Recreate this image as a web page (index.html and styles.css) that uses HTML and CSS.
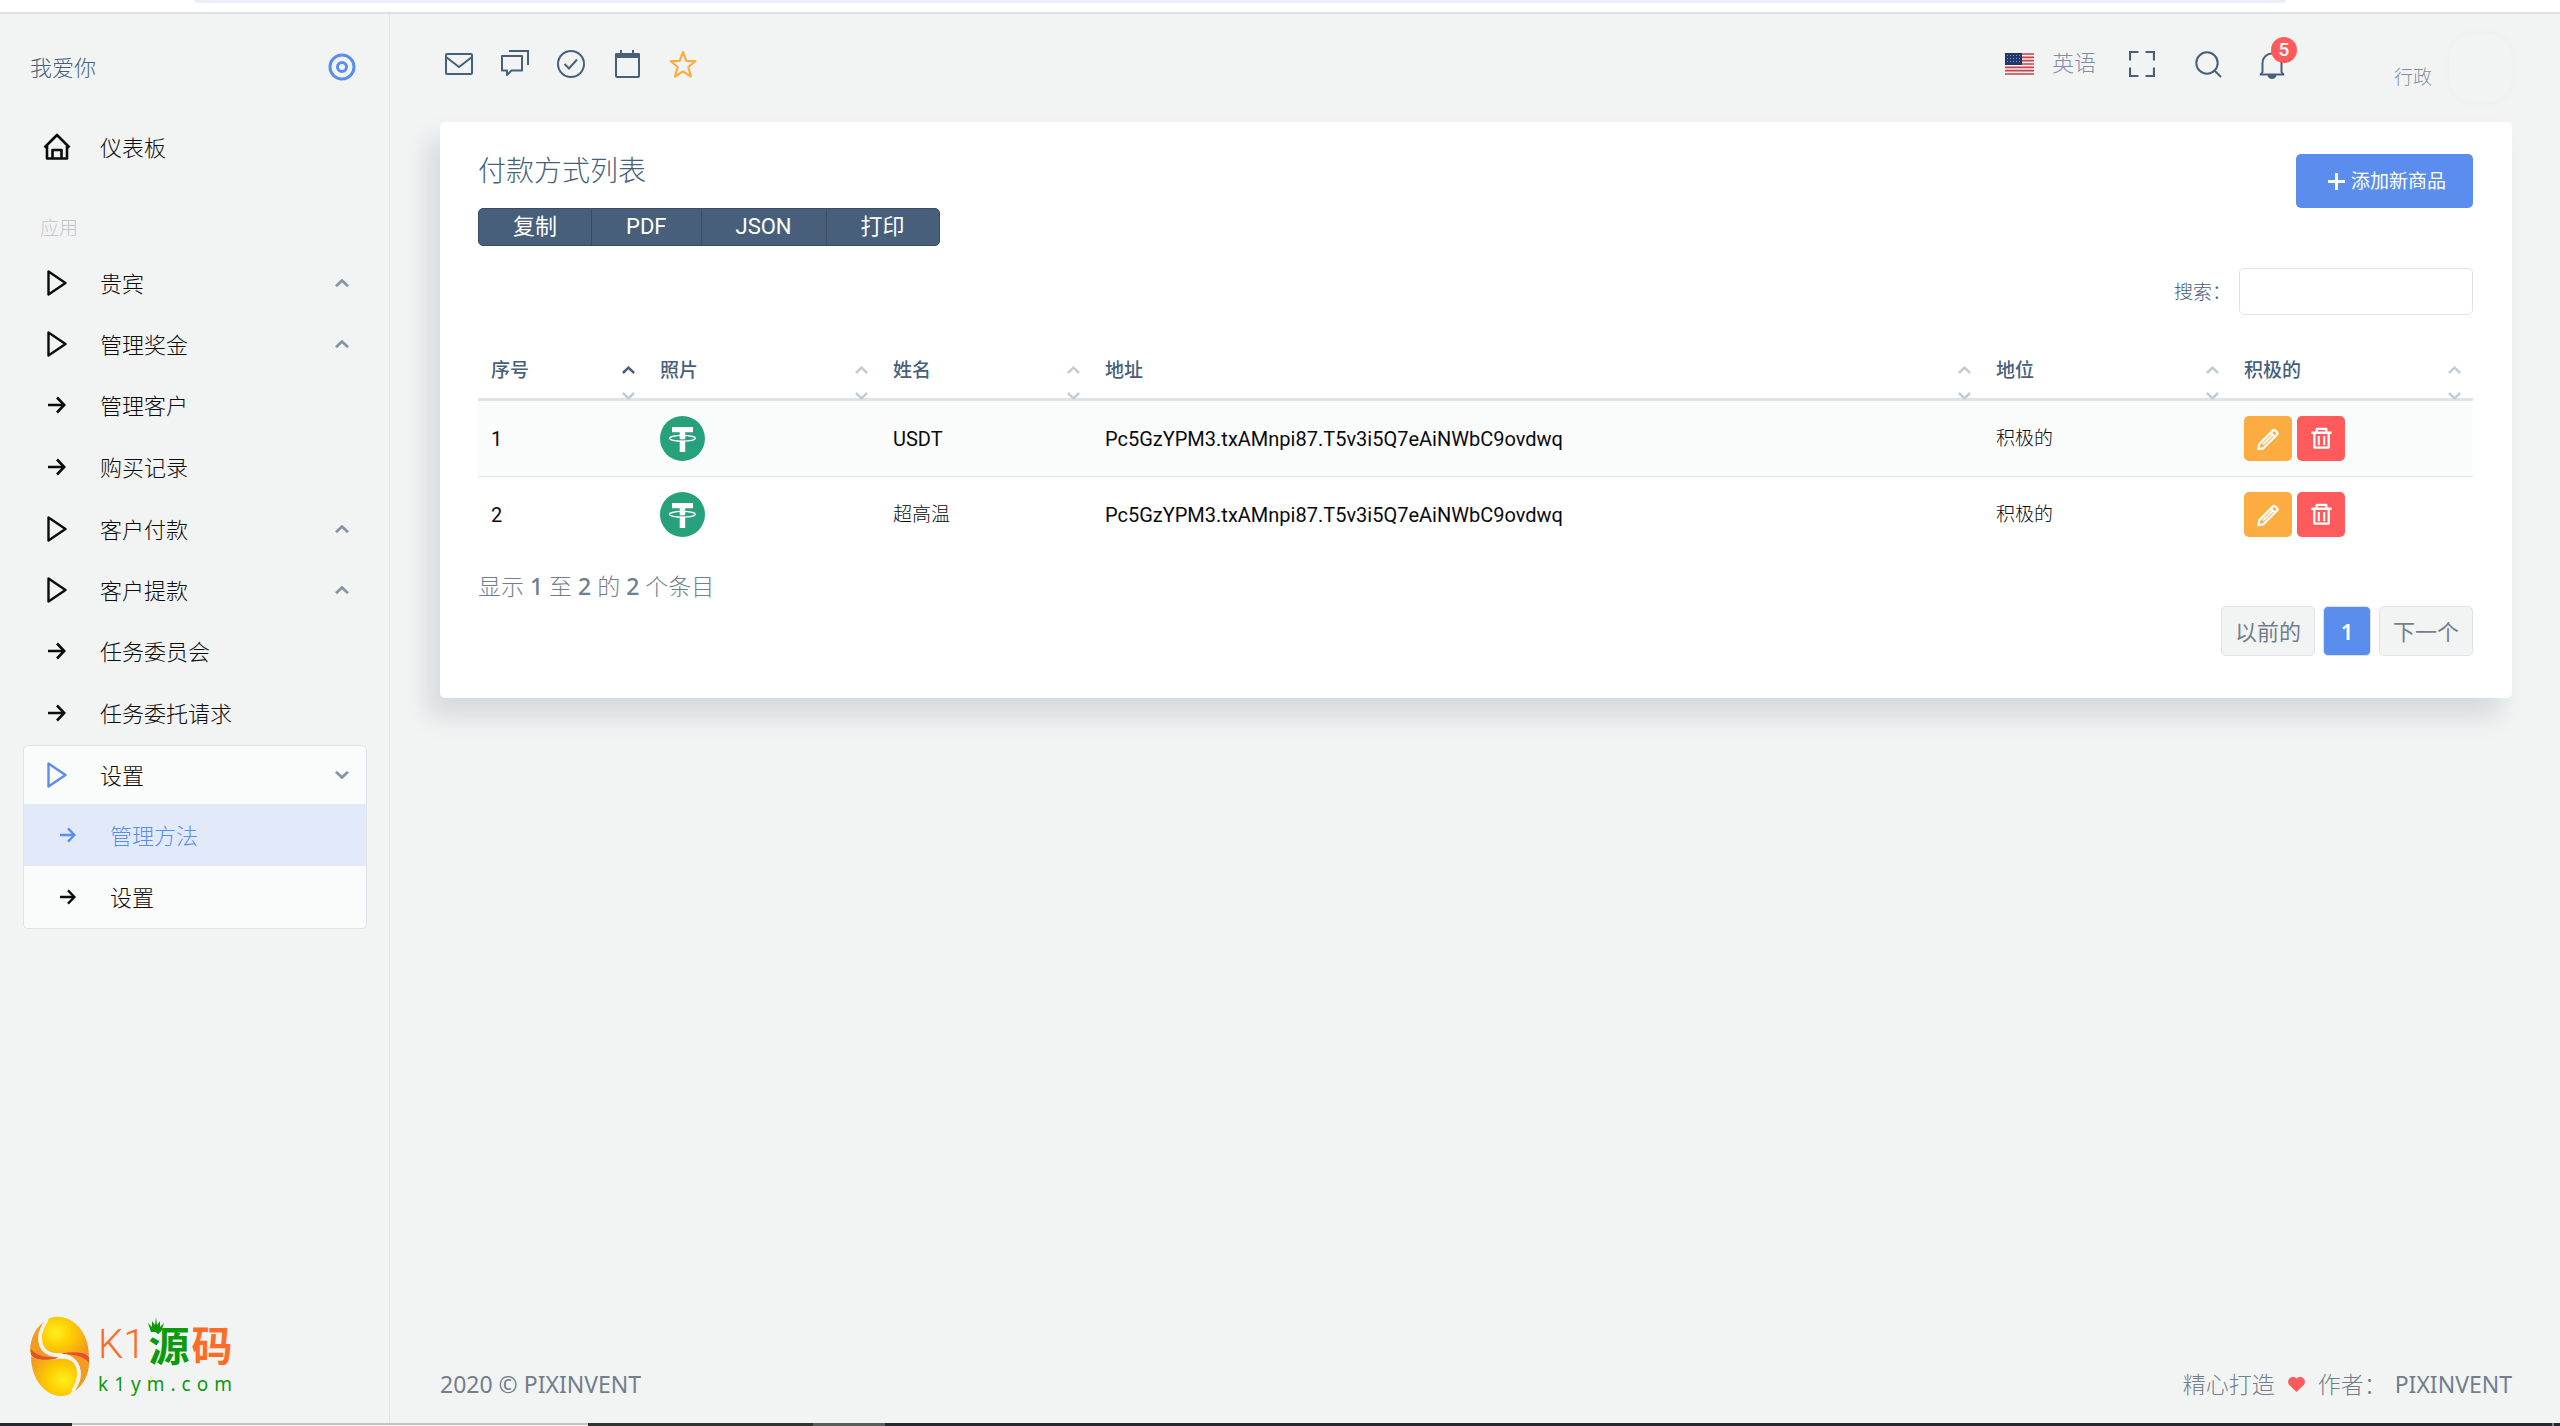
FILE: index.html
```html
<!DOCTYPE html>
<html lang="zh-CN">
<head>
<meta charset="utf-8">
<title>付款方式列表</title>
<link rel="stylesheet" href="styles.css">
</head>
<body>
<svg class="defs" aria-hidden="true">
  <symbol id="play" viewBox="0 0 20 26"><path d="M1.500 1.500v23L18.500 13z" fill="none" stroke="currentColor" stroke-width="2.400" stroke-linejoin="round"/></symbol>
  <symbol id="arrow" viewBox="0 0 18 18"><path d="M0 9h16M9 1.500 16.300 9 9 16.500" fill="none" stroke="currentColor" stroke-width="2.600"/></symbol>
  <symbol id="chevron" viewBox="0 0 14 8"><path d="M1 7.200 7 1.500 13 7.200" fill="none" stroke="currentColor" stroke-width="2.700"/></symbol>
  <symbol id="tether" viewBox="0 0 45 45"><circle cx="22.500" cy="22.500" r="22.500" fill="#26a17b"/><path d="M12 11h21v5.200h-7.800v4q0 1.500 0 3V36h-5.500V16.200H12z" fill="#fff"/><ellipse cx="22.400" cy="22.300" rx="13" ry="2.900" fill="none" stroke="#fff" stroke-width="1.300"/><path d="M19 23.700q3.500.4 7 0" fill="none" stroke="#26a17b" stroke-width="1"/></symbol>
  <symbol id="pencil" viewBox="0 0 24 24"><path d="M2.500 22 3.200 17.200 17 3.400a1.500 1.500 0 0 1 2.100 0l2 2a1.500 1.500 0 0 1 0 2.100L7.300 21.300z" fill="none" stroke="currentColor" stroke-width="2.300" stroke-linejoin="round"/><path d="M6.800 17.700 16.500 8M15.200 6l3.400 3.400" stroke="currentColor" stroke-width="1.800"/></symbol>
  <symbol id="trash" viewBox="0 0 24 24"><path d="M1.500 6h21M7 6V2h10v4M4.500 6v15.500H19.500V6" fill="none" stroke="currentColor" stroke-width="2.400" stroke-linejoin="round"/><path d="M9.200 9.500v9.500M14.800 9.500v9.500" stroke="currentColor" stroke-width="2.200"/></symbol>
</svg>

<div class="chrome"><div class="address"></div></div>

<div class="shell">
  <aside class="sidebar">
    <div class="brand">
      <a href="#">我爱你</a>
      <button class="pin" aria-label="固定菜单"><svg width="28" height="28" viewBox="0 0 28 28"><circle cx="14" cy="14" r="12" fill="none" stroke="currentColor" stroke-width="3"/><circle cx="14" cy="14" r="4.500" fill="none" stroke="currentColor" stroke-width="3"/></svg></button>
    </div>
    <nav class="menu">
      <a class="item leaf" href="#"><span class="ico"><svg width="28" height="28" viewBox="0 0 28 28"><path d="M1.500 14.500 14 2 26.500 14.500M4 12.500V25.500H24V12.500M9.500 25.500V17h9v8.500" fill="none" stroke="currentColor" stroke-width="2.600" stroke-linejoin="round"/></svg></span><span>仪表板</span></a>
      <div class="section">应用</div>
      <a class="item" href="#"><span class="ico"><svg width="20" height="26"><use href="#play"/></svg></span><span>贵宾</span><svg class="caret" width="14" height="8"><use href="#chevron"/></svg></a>
      <a class="item" href="#"><span class="ico"><svg width="20" height="26"><use href="#play"/></svg></span><span>管理奖金</span><svg class="caret" width="14" height="8"><use href="#chevron"/></svg></a>
      <a class="item leaf" href="#"><span class="ico"><svg width="18" height="18"><use href="#arrow"/></svg></span><span>管理客户</span></a>
      <a class="item leaf" href="#"><span class="ico"><svg width="18" height="18"><use href="#arrow"/></svg></span><span>购买记录</span></a>
      <a class="item" href="#"><span class="ico"><svg width="20" height="26"><use href="#play"/></svg></span><span>客户付款</span><svg class="caret" width="14" height="8"><use href="#chevron"/></svg></a>
      <a class="item" href="#"><span class="ico"><svg width="20" height="26"><use href="#play"/></svg></span><span>客户提款</span><svg class="caret" width="14" height="8"><use href="#chevron"/></svg></a>
      <a class="item leaf" href="#"><span class="ico"><svg width="18" height="18"><use href="#arrow"/></svg></span><span>任务委员会</span></a>
      <a class="item leaf" href="#"><span class="ico"><svg width="18" height="18"><use href="#arrow"/></svg></span><span>任务委托请求</span></a>
      <div class="group">
        <a class="item open" href="#"><span class="ico"><svg width="20" height="26"><use href="#play"/></svg></span><span>设置</span><svg class="caret" width="14" height="8"><use href="#chevron"/></svg></a>
        <a class="item sub active" href="#"><span class="ico"><svg width="16" height="16"><use href="#arrow"/></svg></span><span>管理方法</span></a>
        <a class="item sub" href="#"><span class="ico"><svg width="16" height="16"><use href="#arrow"/></svg></span><span>设置</span></a>
      </div>
    </nav>
    <a class="logo" href="#">
      <svg width="60" height="80" viewBox="0 0 60 80">
        <defs>
          <radialGradient id="g1" cx=".3" cy=".4" r=".8"><stop offset="0" stop-color="#fff01a"/><stop offset=".45" stop-color="#fdcb02"/><stop offset="1" stop-color="#f29a1f"/></radialGradient>
          <radialGradient id="g2" cx=".7" cy=".6" r=".8"><stop offset="0" stop-color="#fff01a"/><stop offset=".45" stop-color="#fdcb02"/><stop offset="1" stop-color="#f29a1f"/></radialGradient>
        </defs>
        <path d="M17 4C6 10 0 22 0 36 6 43 16 45 28 42 10 38 2 20 17 4z" fill="#f39a22"/>
        <path d="M1 33C6 40 16 42 29 41 18 46 6 45 1 39z" fill="#e4502a"/>
        <path d="M43 76C54 70 60 57 59 43 54 36 44 34 32 37 50 40 58 60 43 76z" fill="#f39a22"/>
        <path d="M59 47C54 40 44 38 31 38 42 34 54 34 59 41z" fill="#e4502a"/>
        <path d="M20 2C36-4 59 10 59 40 53 35 42 36 33 37 18 39 12 32 12 22 12 13 15 6 20 2z" fill="url(#g1)"/>
        <path d="M40 78C24 86 1 70 1 40 7 45 18 44 27 43 42 41 48 48 47 58 47 67 44 74 40 78z" fill="url(#g2)"/>
        <path d="M17 4C4 22 9 39 29 39.500 50 40 54 58 43 75" fill="none" stroke="#f6f4ea" stroke-width="3.500"/>
      </svg>
      <span class="wordmark">
        <span class="name"><span class="k1">K1</span><b class="yuan">源</b><b class="ma">码</b></span>
        <span class="domain">k1ym.com</span>
      </span>
      <svg class="crown" width="16" height="16" viewBox="0 0 16 16"><path d="M3 15 0 6l4 4L4 4l3 4 1-8 1 8 3-4v6l4-4-3 9z" fill="#0a9a0a"/></svg>
    </a>
  </aside>

  <main class="main">
    <header class="topbar">
      <nav class="tools">
        <a href="#" aria-label="邮件"><svg width="28" height="28" viewBox="0 0 28 28"><g fill="none" stroke="currentColor" stroke-width="2"><rect x="1" y="4" width="26" height="20" rx="1"/><path d="M1 7 14 17 27 7"/></g></svg></a>
        <a href="#" aria-label="聊天"><svg width="28" height="28" viewBox="0 0 28 28"><g fill="none" stroke="currentColor" stroke-width="2"><path d="M8 1H27V15"/><path d="M2 6H21V20.500H10.500L6 25V20.500H1V6z" stroke-linejoin="round"/></g></svg></a>
        <a href="#" aria-label="待办"><svg width="28" height="28" viewBox="0 0 28 28"><g fill="none" stroke="currentColor" stroke-width="2"><circle cx="14" cy="14" r="13"/><path d="M7.500 14 12 18.500 20 9.500"/></g></svg></a>
        <a href="#" aria-label="日历"><svg width="28" height="28" viewBox="0 0 28 28"><rect x="3" y="4" width="23" height="23" rx="1" fill="none" stroke="currentColor" stroke-width="2"/><path d="M2 3.500h25V8H2zM7 0h2v4H7zM19 0h2v4h-2z" fill="currentColor"/></svg></a>
        <a class="star" href="#" aria-label="收藏"><svg width="28" height="28" viewBox="0 0 28 28"><path d="M14 2 17.300 10.800 26.300 11.200 19.300 17 22 26.500 14 21.300 6 26.500 8.700 17 1.700 11.200 10.700 10.800z" fill="none" stroke="currentColor" stroke-width="2.200" stroke-linejoin="round"/></svg></a>
      </nav>
      <div class="user-tools">
        <a class="lang" href="#"><svg width="29" height="22" viewBox="0 0 29 22"><path fill="#f7eeee" d="M0 0h29v22H0z"/><path d="M0 1h29M0 4.300h29M0 7.700h29M0 11h29M0 14.300h29M0 17.700h29M0 21h29" stroke="#c8414b" stroke-width="1.700"/><path fill="#22376b" d="M0 0h17v12H0z"/><path d="M2 2.500h14M2 5.500h14M2 8.500h14" stroke="#8c9abb" stroke-width="1" stroke-dasharray="1 2"/></svg><span>英语</span></a>
        <button aria-label="全屏"><svg width="26" height="26" viewBox="0 0 26 26"><path d="M1 9.500V1H9.500M16.500 1H25V9.500M25 16.500V25H16.500M9.500 25H1V16.500" fill="none" stroke="currentColor" stroke-width="2.200"/></svg></button>
        <button class="find" aria-label="搜索"><svg width="27" height="27" viewBox="0 0 27 27"><g fill="none" stroke="currentColor" stroke-width="2"><circle cx="12" cy="12" r="10.700"/><path d="M19 19 26 26"/></g></svg></button>
        <button class="bell" aria-label="通知"><svg width="26" height="28" viewBox="0 0 26 28"><path d="M3.500 21V12a9.500 9.500 0 0 1 19 0V21L24.500 23.500H1.500z" fill="none" stroke="currentColor" stroke-width="2" stroke-linejoin="round"/><path d="M8.500 24h9a4.500 4 0 0 1-9 0z" fill="currentColor"/></svg><span class="badge">5</span></button>
        <a class="user" href="#"><span>行政</span><span class="avatar"></span></a>
      </div>
    </header>

    <section class="card">
      <div class="card-head">
        <div>
          <h1>付款方式列表</h1>
          <div class="export"><button>复制</button><button>PDF</button><button>JSON</button><button>打印</button></div>
        </div>
        <button class="add"><svg width="17" height="17" viewBox="0 0 17 17"><path d="M8.500 0v17M0 8.500h17" stroke="currentColor" stroke-width="3"/></svg><span>添加新商品</span></button>
      </div>
      <div class="search"><label for="q">搜索：</label><input id="q" type="search"></div>
      <table class="grid">
        <colgroup><col class="c-no"><col class="c-photo"><col class="c-name"><col><col class="c-status"><col class="c-act"></colgroup>
        <thead>
          <tr>
            <th class="asc">序号<span class="sort"><svg width="13" height="8"><use href="#chevron"/></svg><svg width="13" height="8"><use href="#chevron"/></svg></span></th>
            <th>照片<span class="sort"><svg width="13" height="8"><use href="#chevron"/></svg><svg width="13" height="8"><use href="#chevron"/></svg></span></th>
            <th>姓名<span class="sort"><svg width="13" height="8"><use href="#chevron"/></svg><svg width="13" height="8"><use href="#chevron"/></svg></span></th>
            <th>地址<span class="sort"><svg width="13" height="8"><use href="#chevron"/></svg><svg width="13" height="8"><use href="#chevron"/></svg></span></th>
            <th>地位<span class="sort"><svg width="13" height="8"><use href="#chevron"/></svg><svg width="13" height="8"><use href="#chevron"/></svg></span></th>
            <th>积极的<span class="sort"><svg width="13" height="8"><use href="#chevron"/></svg><svg width="13" height="8"><use href="#chevron"/></svg></span></th>
          </tr>
        </thead>
        <tbody>
          <tr>
            <td>1</td>
            <td><svg width="45" height="45"><use href="#tether"/></svg></td>
            <td>USDT</td>
            <td>Pc5GzYPM3.txAMnpi87.T5v3i5Q7eAiNWbC9ovdwq</td>
            <td class="zh">积极的</td>
            <td><div class="actions"><button class="edit" aria-label="编辑"><svg width="24" height="24"><use href="#pencil"/></svg></button><button class="del" aria-label="删除"><svg width="23" height="23"><use href="#trash"/></svg></button></div></td>
          </tr>
          <tr>
            <td>2</td>
            <td><svg width="45" height="45"><use href="#tether"/></svg></td>
            <td class="zh">超高温</td>
            <td>Pc5GzYPM3.txAMnpi87.T5v3i5Q7eAiNWbC9ovdwq</td>
            <td class="zh">积极的</td>
            <td><div class="actions"><button class="edit" aria-label="编辑"><svg width="24" height="24"><use href="#pencil"/></svg></button><button class="del" aria-label="删除"><svg width="23" height="23"><use href="#trash"/></svg></button></div></td>
          </tr>
        </tbody>
      </table>
      <p class="info">显示 <b>1</b> 至 <b>2</b> 的 <b>2</b> 个条目</p>
      <nav class="pager"><button>以前的</button><button class="current">1</button><button>下一个</button></nav>
    </section>

    <footer class="footer">
      <span class="latin">2020 © PIXINVENT</span>
      <span class="made">精心打造<svg width="17" height="15" viewBox="0 0 17 15"><path d="M8.500 15 1.300 8A4.500 4.500 0 0 1 8.500 1.500 4.500 4.500 0 0 1 15.700 8z" fill="#ff5b5c"/></svg>作者：<a class="latin" href="#">PIXINVENT</a></span>
    </footer>
  </main>
</div>

<div class="taskbar"><span class="window"></span><span class="dim"></span><span class="lit"></span><span class="edge"></span></div>
</body>
</html>
```
FILE: styles.css
```css
* { box-sizing: border-box; }

body {
  margin: 0;
  min-height: 100vh;
  display: flex;
  flex-direction: column;
  background: #f2f4f4;
  color: #475f7b;
  font: 300 22px/32px "Noto Sans", "Noto Sans CJK SC", sans-serif;
}

a { color: inherit; text-decoration: none; }

button {
  padding: 0;
  border: 0;
  background: none;
  color: inherit;
  font: inherit;
}

svg { display: block; flex: none; }
.defs { position: absolute; width: 0; height: 0; }

/* browser edge above the page */
.chrome {
  height: 14px;
  padding: 0 274px 0 194px;
  background: #fff;
  border-bottom: 2px solid #dfe2e1;
}
.address { height: 3px; background: #ebeef9; border-radius: 0 0 12px 12px; }

.shell { flex: 1; display: flex; }

/* sidebar */
.sidebar {
  flex: 0 0 390px;
  display: flex;
  flex-direction: column;
  border-right: 1px solid #dfe3e4;
}
.brand {
  display: flex;
  align-items: center;
  justify-content: space-between;
  height: 102px;
  padding: 4px 33px 0 30px;
}
.pin { color: #5a8dee; }
.menu { padding: 0 22px 0 23px; color: #0b0b0b; }
.item {
  display: flex;
  align-items: center;
  height: 61px;
  padding: 0 18px 0 20px;
}
.item.leaf { height: 62px; }
.item .ico { display: flex; justify-content: center; width: 28px; margin-right: 29px; }
.section {
  height: 74px;
  padding: 34px 17px 0;
  color: #bfc6d0;
  font-size: 19px;
}
.caret { margin-left: auto; color: #8494a7; }
.group {
  margin-top: 1px;
  background: #fafbfb;
  border: 1px solid #dfe3e7;
  border-radius: 5px;
}
.group .item { padding: 0 17px 0 19px; }
.group .open { height: 58px; }
.open .ico { color: #5a8dee; }
.open .caret { transform: rotate(180deg); }
.group .sub { height: 62px; padding-left: 30px; }
.sub .ico { margin-right: 28px; }
.active { background: #e2eafa; color: #5a8dee; }

/* site logo */
.logo {
  position: relative;
  display: flex;
  gap: 8px;
  margin: auto 0 27px 30px;
}
.wordmark { display: flex; flex-direction: column; }
.name { display: flex; align-items: center; gap: 2px; height: 58px; color: #ff6d24; font-size: 41px; }
.name b { font-weight: 700; }
.k1 { padding-right: 1px; font: 300 40px/58px "Roboto", sans-serif; }
.name .yuan { color: #0a9a0a; }
.domain { color: #0a9a0a; font-size: 19px; line-height: 20px; letter-spacing: 6px; font-weight: 400; }
.crown { position: absolute; left: 118px; top: 1px; }

/* main column */
.main {
  flex: 1;
  display: flex;
  flex-direction: column;
  padding: 0 48px 0 50px;
}
.topbar {
  display: flex;
  justify-content: space-between;
  height: 108px;
}
.tools { display: flex; gap: 28px; padding: 36px 0 0 5px; }
.star { color: #fdac41; }
.user-tools { display: flex; align-items: flex-start; padding-top: 37px; }
.lang { display: flex; align-items: center; gap: 18px; height: 26px; margin-right: 33px; color: #7f8fa3; }
.lang span { padding-bottom: 4px; }
.find { margin: 0 37px 0 40px; }
.bell { position: relative; }
.badge {
  position: absolute;
  left: 12px;
  top: -14px;
  width: 26px;
  height: 26px;
  border-radius: 50%;
  background: #ff5b5c;
  color: #fff;
  font: 500 19px/26px "Roboto", sans-serif;
}
.user { display: flex; gap: 17px; margin-left: 109px; padding-top: 10px; color: #7f8fa3; font-size: 19px; }
.avatar {
  width: 63px;
  height: 68px;
  margin-top: -27px;
  border-radius: 24px;
  box-shadow: 0 0 8px #eaecee;
}

.card {
  padding: 32px 39px 42px 38px;
  background: #fff;
  border-radius: 5px;
  box-shadow: -12px 18px 27px rgba(25, 42, 70, .13);
}
.card-head { display: flex; justify-content: space-between; align-items: flex-start; }
h1 { margin: 0 0 22px; font-size: 28px; line-height: 32px; font-weight: 300; }
.export { display: flex; border: 1px solid #394c62; border-radius: 5px; background: #475f7b; color: #fff; font-family: "Roboto", "Noto Sans CJK SC", sans-serif; font-weight: 400; }
.export button { height: 36px; padding: 0 34px; line-height: 34px; }
.export button + button { border-left: 1px solid #394c62; }
.add {
  display: flex;
  align-items: center;
  gap: 6px;
  height: 54px;
  padding: 0 27px 0 32px;
  border-radius: 5px;
  background: #5a8dee;
  color: #fff;
  font-size: 19px;
  font-weight: 400;
}
.search { display: flex; justify-content: flex-end; align-items: center; gap: 8px; margin-top: 22px; font-size: 19px; }
.search input {
  width: 234px;
  height: 47px;
  border: 1px solid #dfe3e7;
  border-radius: 5px;
  background: #fff;
  font: inherit;
}

.grid { width: 100%; margin-top: 26px; table-layout: fixed; border-collapse: separate; border-spacing: 0; }
.c-no { width: 169px; }
.c-photo { width: 233px; }
.c-name { width: 212px; }
.c-status { width: 248px; }
.c-act { width: 242px; }
.grid th {
  position: relative;
  height: 60px;
  padding: 0 13px;
  border-bottom: 3px solid #dfe3e7;
  text-align: left;
  font-size: 19px;
  font-weight: 500;
}
.sort { position: absolute; right: 12px; top: 25px; display: grid; gap: 18px; color: #c3cbd5; }
.sort svg:last-child { transform: rotate(180deg); }
.asc .sort svg:first-child { color: #475f7b; }
.grid td { height: 75px; padding: 0 13px; color: #0b0b0b; font-family: "Roboto", "Noto Sans CJK SC", sans-serif; font-size: 20px; font-weight: 400; }
.grid .zh { font-weight: 300; font-size: 19px; }
.grid tr:first-child td { height: 76px; background: #fafbfb; border-bottom: 1px solid #dfe3e7; }
.actions { display: flex; gap: 5px; }
.actions button { display: grid; place-items: center; width: 48px; height: 45px; border-radius: 5px; color: #fff; }
.edit { background: #fdac41; }
.del { background: #ff5b5c; }
.info { margin: 18px 0 4px; color: #727e8c; font-size: 23px; }
.info b { font-weight: 500; }
.pager { display: flex; justify-content: flex-end; gap: 8px; }
.pager button {
  height: 50px;
  padding: 0 13px;
  border: 1px solid #dfe3e7;
  border-radius: 5px;
  background: #f2f4f4;
  color: #727e8c;
  font-weight: 400;
}
.pager .current { width: 48px; background: #5a8dee; color: #fff; font-weight: 600; }

.footer {
  display: flex;
  justify-content: space-between;
  margin-top: auto;
  padding-bottom: 23px;
  color: #727e8c;
  font-size: 23px;
}
.latin { font-weight: 400; }
.made { display: flex; align-items: center; }
.made svg { margin: 0 13px; }
.made a { margin-left: 8px; }

/* desktop taskbar edge below the page */
.taskbar { display: flex; height: 3px; padding-left: 72px; background: #1f2a33; }
.window { width: 516px; background: #f4f4f4; border-top: 2px solid #c3c3c1; }
.dim { width: 225px; background: #2a3536; }
.lit { width: 72px; background: #555f60; }
.edge { width: 2px; margin: 0 6px 0 auto; background: #7a8085; }
```
